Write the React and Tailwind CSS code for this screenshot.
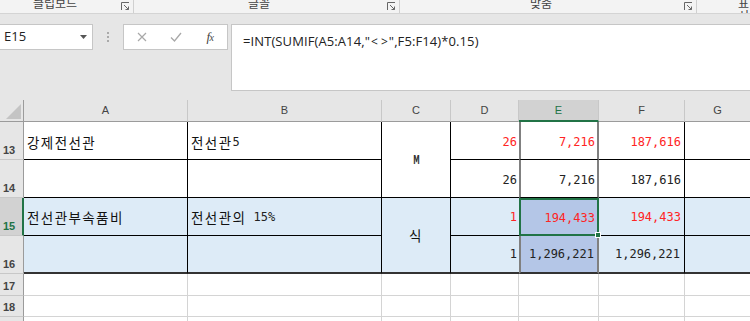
import React from "react";

const kr = "font-['Noto_Sans_CJK_KR',sans-serif]";
const mono = "font-['DejaVu_Sans_Mono',monospace]";

function Kr({ children }) {
  return <span className={`${kr} text-[13.5px] tracking-[1.4px] text-[#111]`}>{children}</span>;
}

function Launcher() {
  return (
    <svg width="9" height="9" viewBox="0 0 9 9" className="shrink-0">
      <path d="M0.5 8V0.5H8" fill="none" stroke="#666" strokeWidth="1" />
      <path d="M3 3L7.5 7.5" stroke="#666" strokeWidth="1" />
      <path d="M4.5 7.5H7.5V4.5" fill="none" stroke="#666" strokeWidth="1" />
    </svg>
  );
}

function Group({ w, ml, label, launcher = true, sep = true }) {
  return (
    <div className={`${w} h-full flex items-start shrink-0 ${sep ? "border-r border-[#d0d0d0]" : ""}`}>
      <span className={`${ml} -mt-[3px] leading-[12px] text-[12px] text-[#444] ${kr}`}>{label}</span>
      {launcher && (
        <span className="ml-auto mr-[3px] mt-[2px]">
          <Launcher />
        </span>
      )}
    </div>
  );
}

function ColH({ label, sel, last }) {
  return (
    <div
      className={`flex items-center justify-center text-[11px] font-['Liberation_Sans',sans-serif] ${
        sel
          ? "bg-[#d2d2d2] text-[#217346] border-b-2 border-b-[#217346]"
          : "bg-[#e6e6e6] text-[#444] border-b border-b-[#9b9b9b]"
      } ${last ? "" : "border-r border-r-[#c8c8c8]"}`}
    >
      {label}
    </div>
  );
}

function RowH({ n, sel }) {
  return (
    <div
      className={`flex items-end pl-[3px] pb-[1px] text-[11px] font-['Liberation_Sans',sans-serif] font-semibold border-b border-b-[#c8c8c8] ${
        sel
          ? "bg-[#d2d2d2] text-[#217346] border-r-2 border-r-[#217346]"
          : "bg-[#e6e6e6] text-[#444] border-r border-r-[#9b9b9b]"
      }`}
    >
      {n}
    </div>
  );
}

function Num({ children, red }) {
  return (
    <span className={`${mono} text-[12px] ${red ? "text-[#ff2424]" : "text-[#222]"}`}>{children}</span>
  );
}

export default function App() {
  const blk = "border-black";
  return (
    <div className="w-[750px] h-[321px] overflow-hidden bg-white">
      {/* ribbon bottom */}
      <div className="h-[14px] bg-[#f3f3f3] border-b border-[#d4d4d4] flex overflow-hidden">
        <Group w="w-[134px]" ml="ml-[33px]" label="클립보드" />
        <Group w="w-[266px]" ml="ml-[114px]" label="글꼴" />
        <Group w="w-[297px]" ml="ml-[130px]" label="맞춤" />
        <Group w="w-[53px]" ml="ml-[41px]" label="표시" launcher={false} sep={false} />
      </div>

      {/* formula bar */}
      <div className="h-[86px] bg-[#e6e6e6] flex items-start pt-[10px]">
        <div className="w-[93px] h-[26px] shrink-0 bg-white border border-l-0 border-[#c6c6c6] flex items-center justify-between pl-[4px] pr-[5px]">
          <span className="text-[13px] text-[#222] font-['Open_Sans',sans-serif]">E15</span>
          <svg width="7" height="4" viewBox="0 0 7 4">
            <path d="M0 0H7L3.5 4Z" fill="#555" />
          </svg>
        </div>
        <div className="w-[30px] h-[26px] shrink-0 flex flex-col items-center justify-center gap-[2px]">
          <span className="w-[2px] h-[2px] bg-[#aaa]" />
          <span className="w-[2px] h-[2px] bg-[#aaa]" />
          <span className="w-[2px] h-[2px] bg-[#aaa]" />
        </div>
        <div className="w-[105px] h-[26px] shrink-0 bg-white border border-[#c6c6c6] flex items-center pl-[1px]">
          <span className="w-[34px] flex justify-center">
            <svg width="10" height="10" viewBox="0 0 10 10">
              <path d="M1 1L9 9M9 1L1 9" stroke="#a8a8a8" strokeWidth="1.2" />
            </svg>
          </span>
          <span className="w-[34px] flex justify-center">
            <svg width="12" height="10" viewBox="0 0 12 10">
              <path d="M1 5.5L4.5 9L11 1" fill="none" stroke="#a8a8a8" strokeWidth="1.3" />
            </svg>
          </span>
          <span className="w-[34px] flex justify-center">
            <span className="italic text-[13px] text-[#444] font-['Liberation_Serif',serif] tracking-[-0.5px]">
              f<span className="text-[10px]">x</span>
            </span>
          </span>
        </div>
        <div className="ml-[3px] flex-1 h-[67px] bg-white border border-r-0 border-[#c6c6c6] pl-[11px] pt-[3px]">
          <span className="text-[13px] text-[#222] font-['Open_Sans',sans-serif] leading-[18px] tracking-[0.1px]">
            =INT(SUMIF(A5:A14,"<span className="px-[1px] text-[12px]">&lt;<span className="ml-[3px]">&gt;</span></span>",F5:F14)*0.15)
          </span>
        </div>
      </div>

      {/* sheet */}
      <div className="grid grid-cols-[24px_164px_194px_69px_68px_80px_86px_65px] grid-rows-[22px_38px_38px_38px_38px_22px_21px_21px]">
        {/* header row */}
        <div className="bg-[#e6e6e6] border-r border-r-[#9b9b9b] border-b border-b-[#9b9b9b] flex items-end justify-end pr-[2px] pb-[2px]">
          <svg width="15" height="15" viewBox="0 0 15 15">
            <path d="M15 0V15H0Z" fill="#c4c4c4" />
          </svg>
        </div>
        <ColH label="A" />
        <ColH label="B" />
        <ColH label="C" />
        <ColH label="D" />
        <ColH label="E" sel />
        <ColH label="F" />
        <ColH label="G" last />

        {/* row 13 */}
        <RowH n="13" />
        <div className={`border-r border-b ${blk} flex items-center pl-[3px] pt-[3px]`}>
          <Kr>강제전선관</Kr>
        </div>
        <div className={`border-r border-b ${blk} flex items-center pl-[3px] pt-[3px]`}>
          <Kr>전선관</Kr>
          <Num>5</Num>
        </div>
        <div className={`row-span-2 border-r border-b ${blk} flex items-center justify-center`}>
          <span className="inline-block scale-x-[0.5] font-bold text-[13px] text-[#333] font-['DejaVu_Sans',sans-serif]">M</span>
        </div>
        <div className={`border-b ${blk} flex items-center justify-end pr-[2px] pt-[3px]`}>
          <Num red>26</Num>
        </div>
        <div className="border-b border-b-black border-l-2 border-r-2 border-l-[#808080] border-r-[#808080] flex items-center justify-end pr-[2px] pt-[3px]">
          <Num red>7,216</Num>
        </div>
        <div className={`border-r border-b ${blk} flex items-center justify-end pr-[3px] pt-[3px]`}>
          <Num red>187,616</Num>
        </div>
        <div className={`border-b ${blk}`} />

        {/* row 14 */}
        <RowH n="14" />
        <div className={`border-r border-b ${blk}`} />
        <div className={`border-r border-b ${blk}`} />
        <div className={`border-b ${blk} flex items-center justify-end pr-[2px] pt-[3px]`}>
          <Num>26</Num>
        </div>
        <div className="border-b border-b-black border-l-2 border-r-2 border-l-[#808080] border-r-[#808080] flex items-center justify-end pr-[2px] pt-[3px]">
          <Num>7,216</Num>
        </div>
        <div className={`border-r border-b ${blk} flex items-center justify-end pr-[3px] pt-[3px]`}>
          <Num>187,616</Num>
        </div>
        <div className={`border-b ${blk}`} />

        {/* row 15 */}
        <RowH n="15" sel />
        <div className={`bg-[#ddebf7] border-r border-b ${blk} flex items-center pl-[3px] pt-[1px]`}>
          <Kr>전선관부속품비</Kr>
        </div>
        <div className={`bg-[#ddebf7] border-r border-b ${blk} flex items-center pl-[3px] pt-[1px]`}>
          <Kr>전선관의</Kr>
          <Num>&nbsp;15%</Num>
        </div>
        <div className="row-span-2 bg-[#ddebf7] border-r border-r-black border-b-2 border-b-[#333] flex items-center justify-center">
          <Kr>식</Kr>
        </div>
        <div className={`bg-[#ddebf7] border-b ${blk} flex items-center justify-end pr-[2px] pt-[1px]`}>
          <Num red>1</Num>
        </div>
        <div className="relative bg-[#b4c6e7] border-2 border-[#217346] flex items-center justify-end pr-[2px] pt-[1px]">
          <Num red>194,433</Num>
          <span className="absolute -right-[4px] -bottom-[4px] w-[6px] h-[6px] bg-[#217346] border border-white" />
        </div>
        <div className={`bg-[#ddebf7] border-r border-b ${blk} flex items-center justify-end pr-[3px] pt-[1px]`}>
          <Num red>194,433</Num>
        </div>
        <div className={`bg-[#ddebf7] border-b ${blk}`} />

        {/* row 16 */}
        <RowH n="16" />
        <div className="bg-[#ddebf7] border-r border-r-black border-b-2 border-b-[#333]" />
        <div className="bg-[#ddebf7] border-r border-r-black border-b-2 border-b-[#333]" />
        <div className="bg-[#ddebf7] border-b-2 border-b-[#333] flex items-center justify-end pr-[2px]">
          <Num>1</Num>
        </div>
        <div className="bg-[#b4c6e7] border-b-2 border-b-[#333] border-l-2 border-r-2 border-l-[#808080] border-r-[#808080] flex items-center justify-end pr-[3px]">
          <Num>1,296,221</Num>
        </div>
        <div className="bg-[#ddebf7] border-r border-r-black border-b-2 border-b-[#333] flex items-center justify-end pr-[4px]">
          <Num>1,296,221</Num>
        </div>
        <div className="bg-[#ddebf7] border-b-2 border-b-[#333]" />

        {/* rows 17-19 */}
        {["17", "18", "19"].map((n) => (
          <React.Fragment key={n}>
            <RowH n={n} />
            <div className="border-r border-b border-[#d4d4d4]" />
            <div className="border-r border-b border-[#d4d4d4]" />
            <div className="border-r border-b border-[#d4d4d4]" />
            <div className="border-r border-b border-[#d4d4d4]" />
            <div className="border-r border-b border-[#d4d4d4]" />
            <div className="border-r border-b border-[#d4d4d4]" />
            <div className="border-b border-[#d4d4d4]" />
          </React.Fragment>
        ))}
      </div>
    </div>
  );
}
